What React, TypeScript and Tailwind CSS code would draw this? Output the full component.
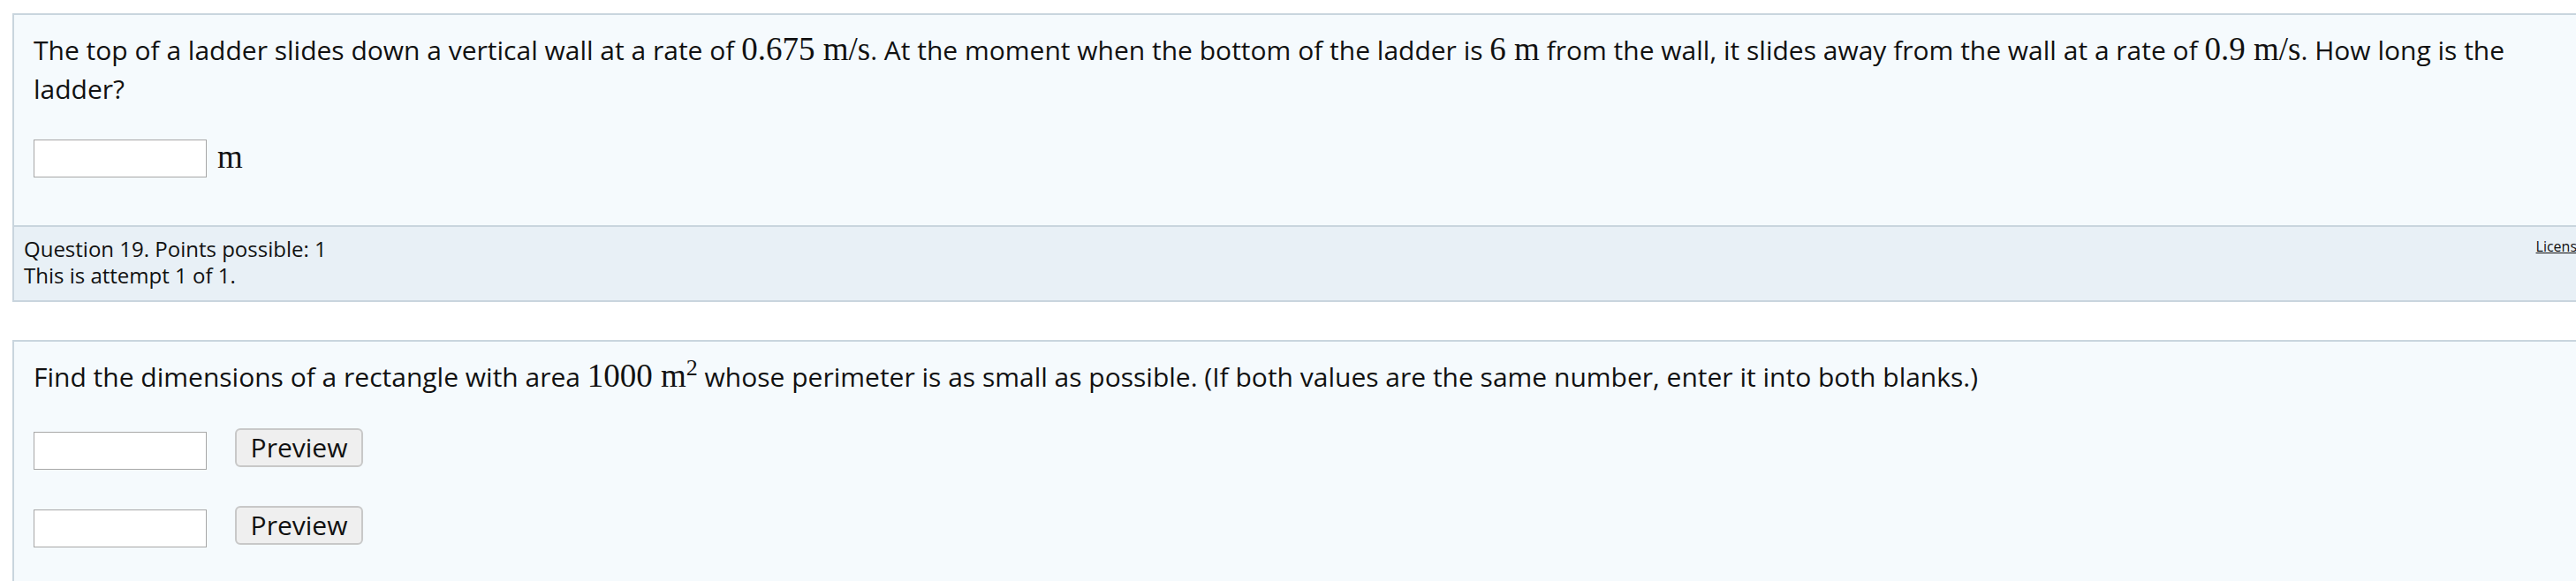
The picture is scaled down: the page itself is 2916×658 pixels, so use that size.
import React from "react";

const M = ({ children }: { children: React.ReactNode }) => (
  <span className="font-['Liberation_Serif',serif] text-[37px] leading-none">{children}</span>
);

export default function App() {
  return (
    <div className="h-[658px] w-full overflow-hidden bg-white pl-[14px] pt-[15px] font-['Open_Sans',sans-serif] text-[#111]">
      <div className="w-[2932px] border-2 border-[#c9d5de] bg-[#f5fafd]">
        <div className="pl-[22px] pt-[18px] pb-[54px]">
          <p className="text-[30px] leading-[44px]">
            The top of a ladder slides down a vertical wall at a rate of <M>0.675 m/s</M>. At the moment when the
            bottom of the ladder is <M>6 m</M> from the wall, it slides away from the wall at a rate of{" "}
            <M>0.9 m/s</M>. How long is the
            <br />
            ladder?
          </p>
          <div className="mt-[35px] flex h-[43px] items-center gap-[12px]">
            <input type="text" className="h-[43px] w-[196px] border border-[#a7a7a7] bg-white outline-none" />
            <span className="mt-[-4px] font-['Liberation_Serif',serif] text-[37px] leading-none">m</span>
          </div>
        </div>
        <div className="flex items-start justify-between border-t-2 border-[#c9d5de] bg-[#e8f0f6] pl-[11px] pr-[18px] pt-[10px] pb-[13px]">
          <div className="text-[24px] leading-[30px]">
            <div>Question 19. Points possible: 1</div>
            <div>This is attempt 1 of 1.</div>
          </div>
          <a className="text-[16px] leading-[24px] underline">License</a>
        </div>
      </div>

      <div className="mt-[43px] w-[2932px] border-2 border-[#c9d5de] bg-[#f5fafd]">
        <div className="pl-[22px] pt-[18px] pb-[60px]">
          <p className="text-[30px] leading-[44px]">
            Find the dimensions of a rectangle with area{" "}
            <M>
              1000 m<sup className="text-[26px] leading-none">2</sup>
            </M>{" "}
            whose perimeter is as small as possible. (If both values are the same number, enter it into both blanks.)
          </p>
          <div className="mt-[36px] flex flex-col gap-[41px]">
            <div className="flex items-start gap-[32px]">
              <input type="text" className="mt-[4px] h-[43px] w-[196px] border border-[#a7a7a7] bg-white outline-none" />
              <button className="h-[44px] w-[145px] rounded-[6px] border-2 border-[#c8c8c8] bg-[#efefef] text-[30px] leading-none text-[#111]">
                Preview
              </button>
            </div>
            <div className="flex items-start gap-[32px]">
              <input type="text" className="mt-[4px] h-[43px] w-[196px] border border-[#a7a7a7] bg-white outline-none" />
              <button className="h-[44px] w-[145px] rounded-[6px] border-2 border-[#c8c8c8] bg-[#efefef] text-[30px] leading-none text-[#111]">
                Preview
              </button>
            </div>
          </div>
        </div>
      </div>
    </div>
  );
}
